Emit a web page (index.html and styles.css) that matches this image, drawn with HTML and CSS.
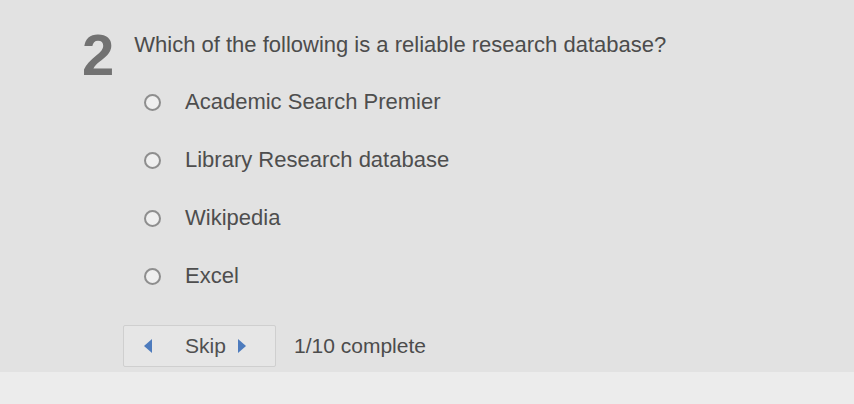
FILE: index.html
```html
<!DOCTYPE html>
<html lang="en">
<head>
  <meta charset="UTF-8">
  <meta name="viewport" content="width=device-width, initial-scale=1.0">
  <title>Quiz</title>
  <link rel="stylesheet" href="styles.css">
</head>
<body>

  <div class="quiz">
    <div class="question">
      <span class="number">2</span>
      <span class="text">Which of the following is a reliable research database?</span>
    </div>

    <form class="options">
      <label class="option"><input type="radio" name="answer"><span>Academic Search Premier</span></label>
      <label class="option"><input type="radio" name="answer"><span>Library Research database</span></label>
      <label class="option"><input type="radio" name="answer"><span>Wikipedia</span></label>
      <label class="option"><input type="radio" name="answer"><span>Excel</span></label>
    </form>

    <div class="footer">
      <button class="skip" type="button">
        <span class="arrow left"></span>
        <span class="skip-label">Skip</span>
        <span class="arrow right"></span>
      </button>
      <span class="progress">1/10 complete</span>
    </div>
  </div>

  <div class="band"></div>

</body>
</html>
```

FILE: styles.css
```css
body {
  font-family: "Liberation Sans", Arial, sans-serif;
  background-color: #e2e2e2;
  margin: 0;
  padding: 0;
  height: 404px;
  overflow: hidden;
  display: flex;
  flex-direction: column;
}
.quiz {
  padding: 26px 0 0 82px;
  height: 346px;
}
.question {
  display: flex;
  align-items: flex-start;
  gap: 20px;
}
.number {
  font-size: 58px;
  font-weight: bold;
  color: #727272;
  line-height: 58px;
}
.text {
  font-size: 22px;
  color: #4c4c4c;
  line-height: 24px;
  margin-top: 7px;
}
.options {
  display: flex;
  flex-direction: column;
  gap: 34px;
  margin: 6px 0 0 62px;
}
.option {
  display: flex;
  align-items: center;
  gap: 24px;
  height: 24px;
  font-size: 22px;
  color: #4e4e4e;
}
.option input {
  appearance: none;
  width: 17px;
  height: 17px;
  margin: 0;
  border: 2px solid #8e8e8e;
  border-radius: 50%;
  background-color: #efefef;
}
.footer {
  display: flex;
  align-items: center;
  gap: 18px;
  margin: 37px 0 0 41px;
}
.skip {
  display: flex;
  align-items: center;
  width: 153px;
  height: 42px;
  padding: 0 0 0 20px;
  background-color: #e6e6e6;
  border: 1px solid #cfcfcf;
  border-radius: 2px;
  font-family: inherit;
  font-size: 21px;
  color: #505050;
}
.skip-label {
  margin: 0 12px 0 33px;
}
.arrow {
  width: 0;
  height: 0;
  border-top: 7px solid transparent;
  border-bottom: 7px solid transparent;
}
.arrow.left {
  border-right: 8px solid #4d7bbd;
}
.arrow.right {
  border-left: 8px solid #4d7bbd;
}
.progress {
  font-size: 21px;
  color: #4c4c4c;
}
.band {
  flex: 1;
  background-color: #ececec;
}
```
